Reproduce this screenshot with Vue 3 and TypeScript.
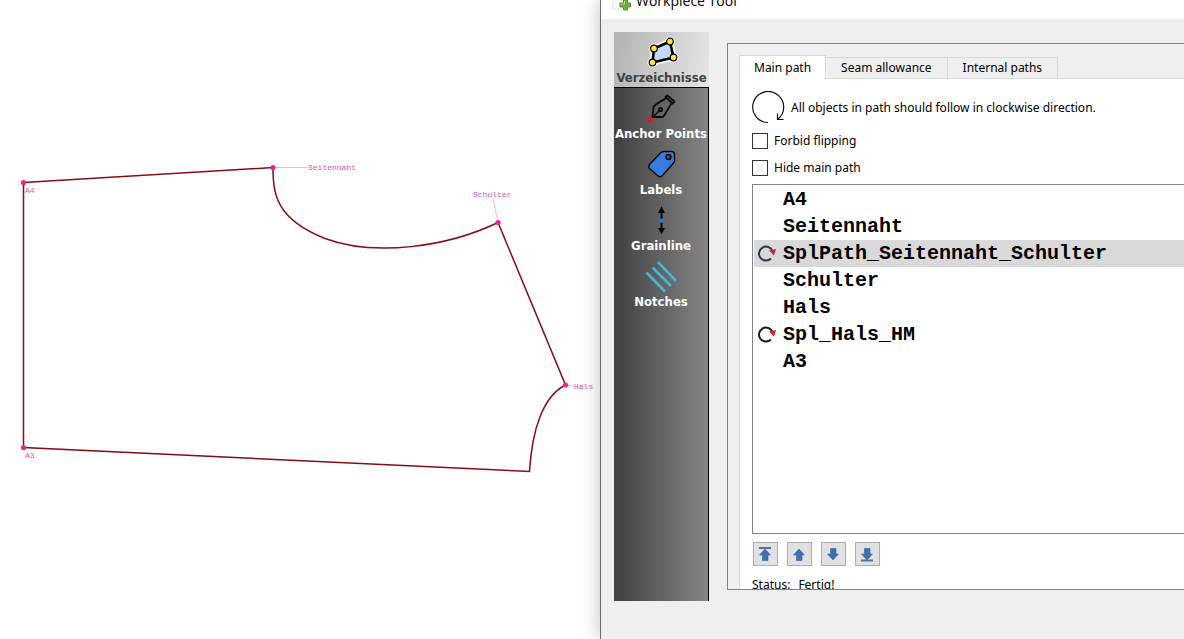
<script setup lang="ts">
import { ref } from 'vue'

interface PathItem {
  name: string
  curve: boolean
}

interface CanvasPoint {
  name: string
  x: number
  y: number
  labelX: number
  labelY: number
  leader?: [number, number]
}

const categories = ['Verzeichnisse', 'Anchor Points', 'Labels', 'Grainline', 'Notches']
const activeCategory = ref('Verzeichnisse')

const tabs = ['Main path', 'Seam allowance', 'Internal paths']
const activeTab = ref('Main path')

const forbidFlipping = ref(false)
const hideMainPath = ref(false)

const items = ref<PathItem[]>([
  { name: 'A4', curve: false },
  { name: 'Seitennaht', curve: false },
  { name: 'SplPath_Seitennaht_Schulter', curve: true },
  { name: 'Schulter', curve: false },
  { name: 'Hals', curve: false },
  { name: 'Spl_Hals_HM', curve: true },
  { name: 'A3', curve: false },
])
const selected = ref(2)

const points: CanvasPoint[] = [
  { name: 'A4', x: 23.5, y: 182.5, labelX: 25, labelY: 193 },
  { name: 'Seitennaht', x: 273, y: 167.5, labelX: 308, labelY: 170, leader: [308, 167.5] },
  { name: 'Schulter', x: 498, y: 222.5, labelX: 473, labelY: 197, leader: [493, 199] },
  { name: 'Hals', x: 565.5, y: 385, labelX: 574, labelY: 389, leader: [574, 386] },
  { name: 'A3', x: 23.5, y: 447.5, labelX: 25, labelY: 458 },
]

const moves = [
  { label: 'Move to top', up: true, bar: true },
  { label: 'Move up', up: true, bar: false },
  { label: 'Move down', up: false, bar: false },
  { label: 'Move to bottom', up: false, bar: true },
]

function move(up: boolean, toEnd: boolean) {
  const list = items.value
  const last = list.length - 1
  const step = selected.value + (up ? -1 : 1)
  const target = toEnd ? (up ? 0 : last) : Math.min(last, Math.max(0, step))
  const [entry] = list.splice(selected.value, 1)
  list.splice(target, 0, entry)
  selected.value = target
}
</script>

<template>
  <div class="screen">
    <main class="canvas">
      <svg class="drawing" viewBox="0 0 600 639" preserveAspectRatio="xMinYMin meet">
        <path
          class="outline"
          d="M23.500 182.500L273 167.500C273 194 276 219 325 238.500C375 257 447 247 498 222.500L565.500 385C543 396 532 430 529.500 471.500L23.500 447.500Z"
        />
        <g v-for="p in points" :key="p.name">
          <line v-if="p.leader" class="leader" :x1="p.x" :y1="p.y" :x2="p.leader[0]" :y2="p.leader[1]" />
          <circle class="point" :cx="p.x" :cy="p.y" r="2.600" />
          <text class="point-label" :x="p.labelX" :y="p.labelY">{{ p.name }}</text>
        </g>
      </svg>
    </main>

    <section class="dialog">
      <header class="titlebar">
        <svg class="app-icon" width="20" height="20" viewBox="0 0 20 20">
          <path d="M4 0L1 18L9 18L12 0Z" fill="#fafafa" stroke="#e6e6e6" />
          <path d="M12.500 8.500h4v3.500h3v4h-3v3h-4v-3h-3.500v-4h3.500z" fill="#72ad43" stroke="#5c8a3e" />
          <path d="M13.500 10v3h-3.500" fill="none" stroke="#b4dd8f" />
        </svg>
        <span>Workpiece Tool</span>
      </header>

      <div class="body">
        <nav class="sidebar">
          <button
            v-for="c in categories"
            :key="c"
            type="button"
            class="category"
            :class="{ active: c === activeCategory }"
            @click="activeCategory = c"
          >
            <svg class="category-icon" width="34" height="34" viewBox="0 0 34 34">
              <g v-if="c === 'Verzeichnisse'" stroke-linejoin="round">
                <path d="M9 13.500L25 6.500L28.500 22.500L7.500 27.500Z" fill="#fff" stroke="#fff" stroke-width="6" />
                <g fill="#fff">
                  <circle cx="9" cy="13.500" r="5" /><circle cx="25" cy="6.500" r="5" />
                  <circle cx="28.500" cy="22.500" r="5" /><circle cx="7.500" cy="27.500" r="5" />
                </g>
                <path d="M9 13.500L25 6.500L28.500 22.500L7.500 27.500Z" fill="#c5d9f5" stroke="#000" stroke-width="2.600" />
                <g fill="#fbe83b" stroke="#000" stroke-width="1.200">
                  <circle cx="9" cy="13.500" r="3.300" /><circle cx="25" cy="6.500" r="3.300" />
                  <circle cx="28.500" cy="22.500" r="3.300" /><circle cx="7.500" cy="27.500" r="3.300" />
                </g>
              </g>
              <g v-else-if="c === 'Anchor Points'" fill="none" stroke="#0b0b0b" stroke-width="1.800" stroke-linejoin="round">
                <circle cx="6.500" cy="28.500" r="2.600" fill="#f01313" stroke="none" />
                <path d="M21.500 6L23.500 4.500L30.500 10.500L28.500 12.500Z" />
                <path d="M22 7C18 10.500 12 12 9.500 16L8.500 26H19C22.500 22 24 17 27.500 12.500" />
                <path d="M9 26L15.500 19.500" stroke-width="1.300" />
                <circle cx="16.500" cy="18.500" r="1.700" fill="#333" />
              </g>
              <g v-else-if="c === 'Labels'" stroke="#0a0a0a" stroke-width="1.400" stroke-linejoin="round">
                <path d="M17 5.500C18 4.800 19 4.500 20.500 4.500H27.500C29.500 4.500 30.500 5.500 30.500 7.500V14C30.500 15 30 15.500 29.500 16L18.500 28.500C17 30 15 30 13.500 28.500L5.500 21.500C4.500 20.500 4.500 19 5.500 17.500Z" fill="#397be0" />
                <circle cx="24.500" cy="10" r="2.500" fill="#3c4d69" />
              </g>
              <g v-else-if="c === 'Grainline'">
                <path d="M17.500 8V27" stroke="#050505" stroke-width="2" />
                <path d="M17.500 3.500L21 10H14ZM17.500 31.500L21 25H14Z" fill="#050505" />
                <circle cx="17.500" cy="17.500" r="2.200" fill="#3877d6" />
              </g>
              <g v-else stroke="#44b6d0" stroke-width="2.600">
                <path d="M14 3L32 22M8.500 8.500L27 27M2.500 13.500L21 32.500" />
              </g>
            </svg>
            <span>{{ c }}</span>
          </button>
        </nav>

        <div class="frame">
          <div class="tabs" role="tablist">
            <button
              v-for="t in tabs"
              :key="t"
              type="button"
              role="tab"
              class="tab"
              :class="{ current: t === activeTab }"
              :aria-selected="t === activeTab"
              @click="activeTab = t"
            >
              {{ t }}
            </button>
          </div>

          <div class="pane" role="tabpanel">
            <div class="hint">
              <svg width="33" height="33" viewBox="0 0 33 33" fill="none" stroke="#111" stroke-width="1.200">
                <path d="M16 31.500A15.500 15.500 0 1 1 26 28" />
                <path d="M25.500 22.500V28.500H31.500" />
              </svg>
              <span>All objects in path should follow in clockwise direction.</span>
            </div>
            <label class="check"><input v-model="forbidFlipping" type="checkbox" />Forbid flipping</label>
            <label class="check"><input v-model="hideMainPath" type="checkbox" />Hide main path</label>

            <ul class="list">
              <li v-for="(item, i) in items" :key="item.name">
                <button type="button" class="row" :class="{ selected: i === selected }" @click="selected = i">
                  <span class="row-icon">
                    <svg v-if="item.curve" width="20" height="20" viewBox="0 0 20 20">
                      <path
                        d="M14 14.500A7 7 0 1 1 15.500 7"
                        fill="none"
                        :stroke="i === selected ? '#2c3947' : '#1c1c1c'"
                        stroke-width="2"
                      />
                      <path d="M12 6.500L19 5L17 11.500Z" :fill="i === selected ? '#b92a4b' : '#f01818'" />
                    </svg>
                  </span>
                  <span>{{ item.name }}</span>
                </button>
              </li>
            </ul>

            <div class="moves">
              <button
                v-for="m in moves"
                :key="m.label"
                type="button"
                class="move"
                :aria-label="m.label"
                @click="move(m.up, m.bar)"
              >
                <svg width="17" height="17" viewBox="0 0 17 17">
                  <path v-if="m.bar" :d="m.up ? 'M2 2H14' : 'M2 14.500H14'" stroke="#56708f" stroke-width="2" />
                  <path
                    :d="m.up ? 'M8 3L13.500 9H11V14.500H5.500V9H2.500Z' : 'M8 14L13.500 8H11V2.500H5.500V8H2.500Z'"
                    fill="#3f6fb3"
                    stroke="#3561a0"
                    stroke-width=".6"
                  />
                </svg>
              </button>
            </div>
            <div class="status"><span>Status:</span><span>Fertig!</span></div>
          </div>
        </div>
      </div>
    </section>
  </div>
</template>

<style>
body {
  margin: 0;
}
</style>

<style scoped>
.screen {
  display: grid;
  grid-template-columns: minmax(0, 600fr) minmax(0, 584fr);
  height: 100vh;
  overflow: hidden;
  background: #fff;
  color: #000;
  font: 12px/18px "Noto Sans", sans-serif;
}

button {
  margin: 0;
  padding: 0;
  border: 0;
  background: none;
  color: inherit;
  font: inherit;
}

.canvas {
  min-height: 0;
}

.drawing {
  display: block;
  width: 100%;
  height: 100%;
}

.outline {
  fill: none;
  stroke: #850d15;
  stroke-width: 1.5;
}

.leader {
  stroke: #ffb3dc;
  stroke-width: 1;
}

.point {
  fill: #f51d93;
}

.point-label {
  fill: #ee50aa;
  font: 8px "Liberation Mono", monospace;
}

.dialog {
  display: flex;
  flex-direction: column;
  min-height: 0;
  border-left: 1px solid #6c6c6c;
  background: #efefef;
  box-shadow: 0 0 18px rgba(0, 0, 0, 0.25);
}

.titlebar {
  display: flex;
  flex: none;
  align-items: flex-end;
  gap: 5px;
  height: 11px;
  padding: 0 10px 8px;
  overflow: hidden;
  background: #fff;
  font: 14px/20px "Open Sans", sans-serif;
}

.app-icon {
  flex: none;
}

.body {
  display: flex;
  flex: 1;
  gap: 18px;
  min-height: 0;
  padding: 13px 0 38px 13px;
}

.sidebar {
  box-sizing: border-box;
  flex: none;
  width: 95px;
  border-right: 1px solid #000;
  background: linear-gradient(90deg, #404040, #858585);
}

.category {
  box-sizing: border-box;
  display: flex;
  flex-direction: column;
  align-items: center;
  width: 100%;
  height: 56px;
  padding-top: 3px;
  color: #fff;
  font: bold 13px/18px "DejaVu Sans Condensed", "DejaVu Sans", sans-serif;
  white-space: nowrap;
}

/* The active entry runs over the sidebar's right edge. */
.category.active {
  width: calc(100% + 1px);
  border-bottom: 1px solid #000;
  background: linear-gradient(100deg, #b2b2b2, #e6e6e6);
  color: #424242;
}

.category-icon {
  flex: none;
}

.frame {
  display: flex;
  flex: 1;
  flex-direction: column;
  min-width: 0;
  margin: 11px 0;
  padding: 11px 0 0 11px;
  overflow: hidden;
  border: 1px solid #828282;
  border-right: 0;
}

.tabs {
  display: flex;
  flex: none;
  align-items: flex-end;
  height: 23px;
}

.tab {
  box-sizing: border-box;
  height: 21px;
  padding: 0 15px;
  border: 1px solid #d9d9d9;
  border-width: 1px 1px 0 0;
}

.tab.current {
  z-index: 1;
  height: 24px;
  margin-bottom: -1px;
  padding: 0 14px;
  border-left-width: 1px;
  background: #fff;
}

.pane {
  flex: 1 0 auto;
  padding: 12px 0 0 12px;
  border: 1px solid #d9d9d9;
  border-width: 1px 0 0 1px;
  background: #fff;
}

.hint {
  display: flex;
  align-items: center;
  gap: 6px;
  margin-bottom: 3px;
  white-space: nowrap;
}

.check {
  display: flex;
  align-items: center;
  gap: 6px;
  height: 27px;
}

.check input {
  appearance: none;
  box-sizing: border-box;
  width: 16px;
  height: 16px;
  margin: 0;
  border: 1px solid #333;
  background: #fff;
}

.check input:checked {
  background: #333;
}

.list {
  box-sizing: border-box;
  height: 350px;
  margin: 3px 0 8px;
  padding: 1px 0 0 1px;
  border: 1px solid #828282;
  border-right: 0;
  list-style: none;
}

.row {
  display: flex;
  align-items: center;
  gap: 6px;
  width: 100%;
  height: 27px;
  padding-left: 3px;
  font: bold 20px/27px "Liberation Mono", monospace;
  text-align: left;
}

.row.selected {
  background: #d9d9d9;
}

.row-icon {
  display: flex;
  flex: none;
  width: 20px;
}

.moves {
  display: flex;
  gap: 9px;
  margin-bottom: 10px;
  padding-left: 1px;
}

.move {
  box-sizing: border-box;
  display: flex;
  align-items: center;
  justify-content: center;
  width: 25px;
  height: 24px;
  border: 1px solid #adadad;
  background: #e1e1e1;
}

.status {
  display: flex;
  gap: 8px;
}
</style>
